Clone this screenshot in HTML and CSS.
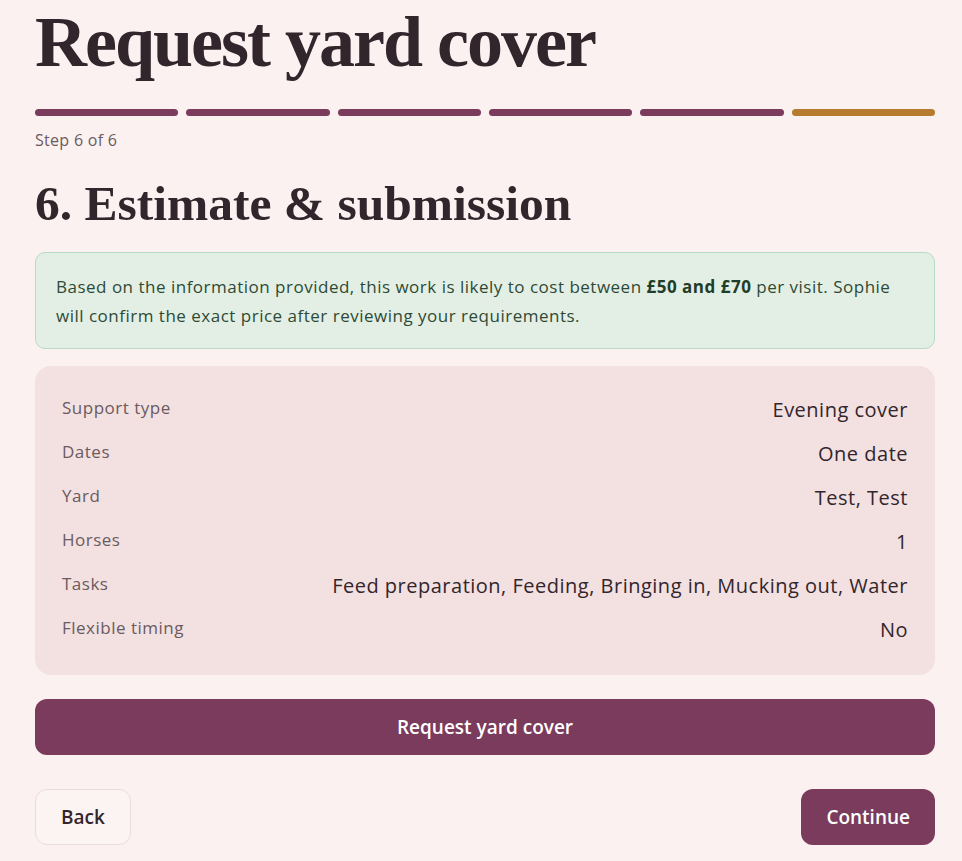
FILE: index.html
```html
<!DOCTYPE html>
<html lang="en">
<head>
  <meta charset="UTF-8" />
  <meta name="viewport" content="width=device-width, initial-scale=1.0" />
  <title>Request yard cover</title>
  <link rel="stylesheet" href="styles.css">
</head>
<body>
  <main class="wizard">
    <h1 class="page-title">Request yard cover</h1>

    <div class="progress">
      <span class="progress-step done"></span>
      <span class="progress-step done"></span>
      <span class="progress-step done"></span>
      <span class="progress-step done"></span>
      <span class="progress-step done"></span>
      <span class="progress-step current"></span>
    </div>
    <p class="step-label">Step 6 of 6</p>

    <h2 class="section-title">6. Estimate &amp; submission</h2>

    <p class="estimate">
      Based on the information provided, this work is likely to cost between <strong>£50 and £70</strong> per visit. Sophie will confirm the exact price after reviewing your requirements.
    </p>

    <dl class="summary">
      <div class="summary-row">
        <dt>Support type</dt>
        <dd>Evening cover</dd>
      </div>
      <div class="summary-row">
        <dt>Dates</dt>
        <dd>One date</dd>
      </div>
      <div class="summary-row">
        <dt>Yard</dt>
        <dd>Test, Test</dd>
      </div>
      <div class="summary-row">
        <dt>Horses</dt>
        <dd>1</dd>
      </div>
      <div class="summary-row">
        <dt>Tasks</dt>
        <dd>Feed preparation, Feeding, Bringing in, Mucking out, Water</dd>
      </div>
      <div class="summary-row">
        <dt>Flexible timing</dt>
        <dd>No</dd>
      </div>
    </dl>

    <button class="btn btn-primary btn-block">Request yard cover</button>

    <div class="nav">
      <button class="btn btn-ghost">Back</button>
      <button class="btn btn-primary">Continue</button>
    </div>
  </main>
</body>
</html>
```

FILE: styles.css
```css
body {
  margin: 0;
  background: #fbf1f0;
  color: #33252c;
  font-family: 'Open Sans', 'Noto Sans', sans-serif;
}
.wizard {
  width: 900px;
  margin: 0 auto 0 35px;
  padding-bottom: 40px;
}
.page-title {
  font-family: 'Liberation Serif', serif;
  font-weight: 700;
  font-size: 72px;
  line-height: 1;
  margin: 0;
  padding-top: 6px;
  letter-spacing: -2px;
  color: #33252c;
}
.progress {
  display: flex;
  gap: 8px;
  margin-top: 31px;
}
.progress-step {
  flex: 1;
  height: 7px;
  border-radius: 4px;
  background: #e6d3d6;
}
.progress-step.done {
  background: #7a3b5c;
}
.progress-step.current {
  background: #b57b2e;
}
.step-label {
  margin: 13px 0 0;
  font-size: 16px;
  letter-spacing: 0.3px;
  color: #6b5a60;
}
.section-title {
  font-family: 'Liberation Serif', serif;
  font-weight: 700;
  font-size: 49.5px;
  line-height: 1.2;
  margin: 23px 0 19px;
  color: #33252c;
}
.estimate {
  margin: 0;
  background: #e3efe4;
  border: 1px solid #b7dbc3;
  border-radius: 10px;
  padding: 19px 24px 18px 20px;
  font-size: 17px;
  line-height: 29px;
  letter-spacing: 0.5px;
  color: #2e4a36;
}
.estimate strong {
  font-weight: 700;
  color: #1f3d29;
}
.summary {
  margin: 17px 0 0;
  background: #f2e1e0;
  border-radius: 16px;
  padding: 30px 27px 31px;
  display: flex;
  flex-direction: column;
  gap: 16px;
}
.summary-row {
  display: flex;
  justify-content: space-between;
  align-items: flex-start;
  gap: 24px;
}
.summary-row dt {
  font-size: 17px;
  letter-spacing: 0.5px;
  color: #6b5a60;
  line-height: 24px;
}
.summary-row dd {
  margin: 0;
  font-size: 20px;
  line-height: 28px;
  letter-spacing: 0.5px;
  text-align: right;
  color: #33252c;
}
.btn {
  font-family: inherit;
  font-size: 19px;
  font-weight: 600;
  height: 56px;
  border-radius: 12px;
  padding: 0 24px;
  cursor: pointer;
  border: 1px solid transparent;
}
.btn-primary {
  background: #7a3b5c;
  color: #fff;
}
.btn-block {
  display: block;
  width: 100%;
  margin-top: 24px;
}
.btn-ghost {
  background: #fcf4f3;
  border-color: #ebdcdc;
  color: #33252c;
  padding: 0 25px;
}
.nav {
  display: flex;
  justify-content: space-between;
  margin-top: 34px;
}
```
